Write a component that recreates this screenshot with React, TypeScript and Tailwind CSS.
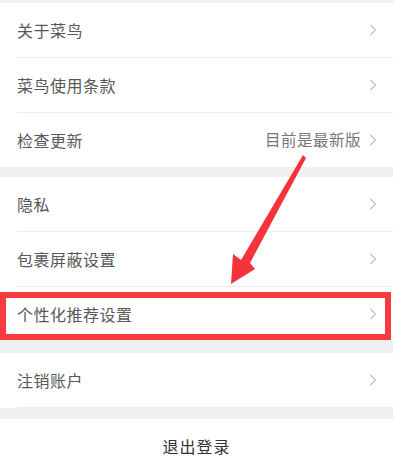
const font = { fontFamily: '"Noto Sans CJK SC", "Noto Sans", sans-serif' };

function Chevron() {
  return (
    <svg width="8" height="12" viewBox="0 0 8 12" className="shrink-0">
      <path d="M1.5 1 L6.5 6 L1.5 11" fill="none" stroke="#bdbdbd" strokeWidth="1.1" />
    </svg>
  );
}

function Row({ label, value, last, h = "h-[55px]" }: { label: string; value?: string; last?: boolean; h?: string }) {
  return (
    <div className="pl-[17px] bg-white">
      <div className={`${h} flex items-center pr-[16px] ${last ? "" : "border-b border-[#ececec]"}`}>
        <span className="flex-1 text-[16px] tracking-[0.5px] text-[#585858]">{label}</span>
        {value && <span className="text-[15.5px] tracking-[0.5px] text-[#777] mr-[8px]">{value}</span>}
        <Chevron />
      </div>
    </div>
  );
}

function Gap({ h }: { h: string }) {
  return <div className={`${h} bg-[#f0f0f0]`} />;
}

export default function App() {
  return (
    <div className="relative w-[411px] h-[472px] bg-white overflow-hidden" style={font}>
      <div className="w-[393px]">
        <Gap h="h-[3px]" />
        <Row label="关于菜鸟" />
        <Row label="菜鸟使用条款" />
        <Row label="检查更新" value="目前是最新版" last h="h-[54px]" />
        <Gap h="h-[10px]" />
        <Row label="隐私" />
        <Row label="包裹屏蔽设置" />
        <Row label="个性化推荐设置" last h="h-[53px]" />
        <Gap h="h-[13px]" />
        <Row label="注销账户" />
        <Gap h="h-[11px]" />
        <div className="h-[53px] flex items-center justify-center text-[16px] tracking-[1px] text-[#333]">
          退出登录
        </div>
      </div>

      {/* highlight box */}
      <div className="absolute left-0 top-[292px] w-[391px] h-[48px] border-[6px] border-[#f73b40]" />

      {/* arrow */}
      <svg className="absolute left-0 top-0" width="411" height="472" viewBox="0 0 411 472">
        <polygon
          points="303,155 306,158 250,263 255,269 231,284 233,254 241,260"
          fill="#f5333a"
        />
      </svg>
    </div>
  );
}
